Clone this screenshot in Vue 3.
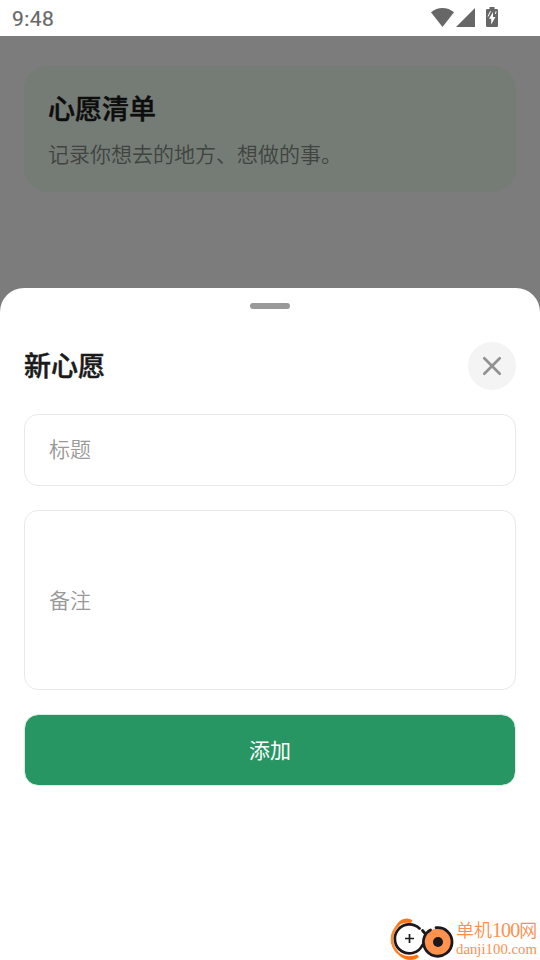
<script setup>
import { ref } from 'vue'

const time = '9:48'
const title = ref('')
const note = ref('')
</script>

<template>
  <div class="screen">
    <header class="status">
      <span class="clock">{{ time }}</span>
      <svg class="status-icons" width="70" height="24" viewBox="430 4 70 24" fill="#676767">
        <path d="M431 12.3C437.500 6.500 447.500 6.500 454 12.300L442.500 27Z" />
        <path d="M456 27H475V8Z" />
        <path fill-rule="evenodd" d="M489.500 7H494.500V9H496.800Q498 9 498 10.200V25.800Q498 27 496.800 27H487.200Q486 27 486 25.800V10.200Q486 9 487.200 9H489.500ZM493 12L489 18.800H491.200V24.500L495.500 17H493Z" />
        <path d="M490.500 11.300L488 16.500M496 11.300L495.500 14" stroke="#fff" stroke-width="1" fill="none" />
      </svg>
    </header>

    <main class="page">
      <section class="card">
        <h1>心愿清单</h1>
        <p>记录你想去的地方、想做的事。</p>
      </section>
    </main>

    <section class="sheet">
      <div class="handle"></div>
      <div class="sheet-head">
        <h2>新心愿</h2>
        <button class="close" aria-label="关闭">
          <svg width="24" height="24" viewBox="0 0 24 24" fill="none" stroke="#929292" stroke-width="2.700" stroke-linecap="round">
            <path d="M4.300 4.300L19.700 19.700M19.700 4.300L4.300 19.700" />
          </svg>
        </button>
      </div>
      <input v-model="title" class="field" placeholder="标题" />
      <input v-model="note" class="field note" placeholder="备注" />
      <button class="submit">添加</button>
    </section>

    <div class="watermark">
      <svg width="66" height="44" viewBox="390 916 66 44" fill="none" stroke-linecap="round">
        <path d="M399 924Q386 938 397 952" stroke="#ff8a35" stroke-width="2.600" />
        <path d="M396 927C398 919 408 916 412.500 920.500L411 923C405 922 401 923 396 927Z" fill="#ff7415" />
        <path d="M394 948C401 956 409 958 417 954.500L419 957C412 963 399 960 394 948Z" fill="#ff7415" />
        <path d="M419.500 928.500A14.500 14.500 0 1 0 422.500 945" stroke="#1c181b" stroke-width="2.700" />
        <path d="M409.500 934V943M405 938.500H414" stroke="#1c181b" stroke-width="1.700" stroke-linecap="butt" />
        <circle cx="438" cy="942" r="13.500" fill="#ff924f" />
        <path d="M436 927.700A14.300 14.300 0 1 1 424.500 936.500Q426.500 932 430.500 930M422.500 930.500L425.500 934" stroke="#1c181b" stroke-width="2.800" />
        <circle cx="438" cy="942" r="5" fill="#1c181b" />
      </svg>
      <div class="brand">
        <span class="brand-name">单机<span class="digits">100</span>网</span>
        <span class="brand-url">danji100.com</span>
      </div>
    </div>
  </div>
</template>

<style>
body {
  margin: 0;
}
</style>

<style scoped>
* {
  box-sizing: border-box;
}
.screen {
  position: relative;
  width: 540px;
  height: 960px;
  display: flex;
  flex-direction: column;
  overflow: hidden;
  background: #7c7c7c;
  font-family: "Noto Sans CJK SC", sans-serif;
}
.status {
  height: 36px;
  flex: none;
  display: flex;
  align-items: center;
  justify-content: space-between;
  padding: 0 40px 0 12px;
  background: #fff;
}
.clock {
  font: 400 21px/36px Roboto, sans-serif;
  letter-spacing: 0.400px;
  padding-top: 2px;
  color: #676767;
  -webkit-text-stroke: 0.200px #676767;
}
.status-icons {
  margin-bottom: 4px;
}
.page {
  height: 252px;
  flex: none;
  padding: 30px 24px 0;
}
.card {
  height: 126px;
  padding: 22px 24px;
  border-radius: 24px;
  background: #747c75;
}
h1,
h2,
p {
  margin: 0;
}
h1,
h2 {
  font-size: 27px;
  line-height: 40px;
  font-weight: 500;
  -webkit-text-stroke: 0.500px currentColor;
}
h1 {
  color: #0d0d0d;
}
.card p {
  margin-top: 10px;
  font-size: 21px;
  line-height: 30px;
  font-weight: 350;
  color: #404340;
}
.sheet {
  flex: 1;
  display: flex;
  flex-direction: column;
  padding: 15px 24px 0;
  border-radius: 24px 24px 0 0;
  background: #fff;
}
.handle {
  align-self: center;
  width: 40px;
  height: 6px;
  border-radius: 3px;
  background: #999;
}
.sheet-head {
  display: flex;
  justify-content: space-between;
  align-items: center;
  height: 48px;
  margin: 33px 0 24px;
}
h2 {
  padding-bottom: 2px;
  color: #1a1a1a;
}
.close {
  display: flex;
  align-items: center;
  justify-content: center;
  width: 48px;
  height: 48px;
  padding: 0;
  border: 0;
  border-radius: 50%;
  background: #f4f4f4;
}
.field {
  width: 100%;
  height: 72px;
  flex: none;
  margin-bottom: 24px;
  padding: 0 24px 4px;
  border: 1px solid #e9e9e9;
  border-radius: 14px;
  background: #fff;
  outline: 0;
  font: 350 21px "Noto Sans CJK SC", sans-serif;
  color: #1a1a1a;
}
.field::placeholder {
  color: #999;
  opacity: 1;
}
.note {
  height: 180px;
  padding-bottom: 3px;
}
.submit {
  height: 72px;
  flex: none;
  padding: 0 0 2px;
  border: 1px solid #d9ede3;
  border-radius: 14px;
  background: #289663;
  background-clip: padding-box;
  font: 400 21px "Noto Sans CJK SC", sans-serif;
  color: #fff;
}
.watermark {
  position: absolute;
  right: 2px;
  bottom: 0;
  display: flex;
  width: 148px;
  height: 44px;
}
.watermark svg {
  flex: none;
}
.brand {
  display: flex;
  flex-direction: column;
  padding-top: 4px;
  white-space: nowrap;
  font-family: "Liberation Serif", "Noto Sans CJK SC", serif;
  color: #ff8f50;
}
.brand-name {
  font-size: 18px;
  line-height: 22px;
  font-weight: 350;
}
.digits {
  font-size: 20px;
  line-height: 20px;
  letter-spacing: -0.900px;
}
.brand-url {
  font-size: 14.800px;
  line-height: 15px;
}
</style>
